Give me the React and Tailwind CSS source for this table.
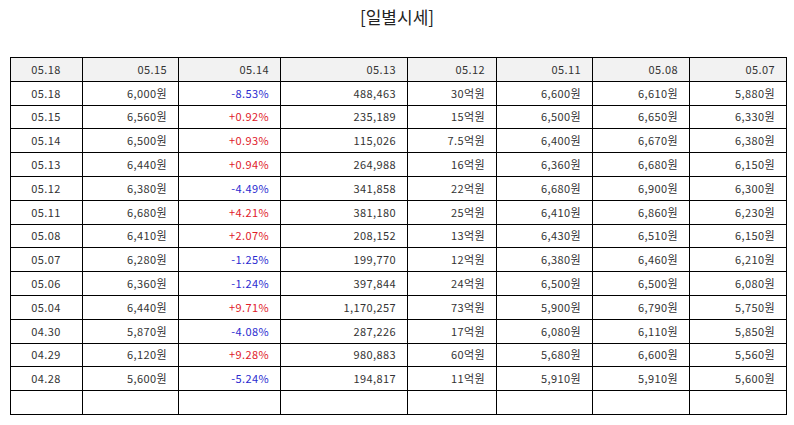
import React from 'react';

const headers = ['05.18', '05.15', '05.14', '05.13', '05.12', '05.11', '05.08', '05.07'];

// date, price, change, volume, amount, open, high, low
const rows = [
  ['05.18', '6,000원', '-8.53%', '488,463', '30억원', '6,600원', '6,610원', '5,880원'],
  ['05.15', '6,560원', '+0.92%', '235,189', '15억원', '6,500원', '6,650원', '6,330원'],
  ['05.14', '6,500원', '+0.93%', '115,026', '7.5억원', '6,400원', '6,670원', '6,380원'],
  ['05.13', '6,440원', '+0.94%', '264,988', '16억원', '6,360원', '6,680원', '6,150원'],
  ['05.12', '6,380원', '-4.49%', '341,858', '22억원', '6,680원', '6,900원', '6,300원'],
  ['05.11', '6,680원', '+4.21%', '381,180', '25억원', '6,410원', '6,860원', '6,230원'],
  ['05.08', '6,410원', '+2.07%', '208,152', '13억원', '6,430원', '6,510원', '6,150원'],
  ['05.07', '6,280원', '-1.25%', '199,770', '12억원', '6,380원', '6,460원', '6,210원'],
  ['05.06', '6,360원', '-1.24%', '397,844', '24억원', '6,500원', '6,500원', '6,080원'],
  ['05.04', '6,440원', '+9.71%', '1,170,257', '73억원', '5,900원', '6,790원', '5,750원'],
  ['04.30', '5,870원', '-4.08%', '287,226', '17억원', '6,080원', '6,110원', '5,850원'],
  ['04.29', '6,120원', '+9.28%', '980,883', '60억원', '5,680원', '6,600원', '5,560원'],
  ['04.28', '5,600원', '-5.24%', '194,817', '11억원', '5,910원', '5,910원', '5,600원'],
];

const widths = ['w-[72px]', 'w-[96px]', 'w-[102px]', 'w-[127px]', 'w-[89px]', 'w-[96px]', 'w-[97px]', 'w-[97px]'];

const cell = 'border border-black h-[23.8px] pl-[10px] pr-[11px] py-0 text-[11px] leading-none tracking-[0.4px]';

const App = () => {
  return (
    <div className="w-[794px] h-[425px] bg-white text-[#333] font-['Noto_Sans_CJK_KR','Noto_Sans',sans-serif]">
      <h1 className="pt-[4px] h-[57px] text-center text-[17px] text-[#222]">[일별시세]</h1>

      <table className="ml-[10px] w-[776px] border-collapse table-fixed">
        <colgroup>
          {widths.map((w, i) => (
            <col key={i} className={w} />
          ))}
        </colgroup>
        <thead>
          <tr className="bg-[#f2f2f2]">
            {headers.map((h, i) => (
              <th key={i} className={`${cell} font-normal ${i === 0 ? 'text-center' : 'text-right'}`}>
                {h}
              </th>
            ))}
          </tr>
        </thead>
        <tbody>
          {rows.map((r, ri) => (
            <tr key={ri}>
              {r.map((v, i) => {
                let color = '';
                if (i === 2) color = v.startsWith('-') ? 'text-[#2b2bd0]' : 'text-[#e0202a]';
                return (
                  <td key={i} className={`${cell} ${i === 0 ? 'text-center' : 'text-right'} ${color}`}>
                    {v}
                  </td>
                );
              })}
            </tr>
          ))}
          {/* empty last row */}
          <tr>
            {headers.map((h, i) => (
              <td key={i} className={cell}></td>
            ))}
          </tr>
        </tbody>
      </table>
    </div>
  );
};

export default App;
